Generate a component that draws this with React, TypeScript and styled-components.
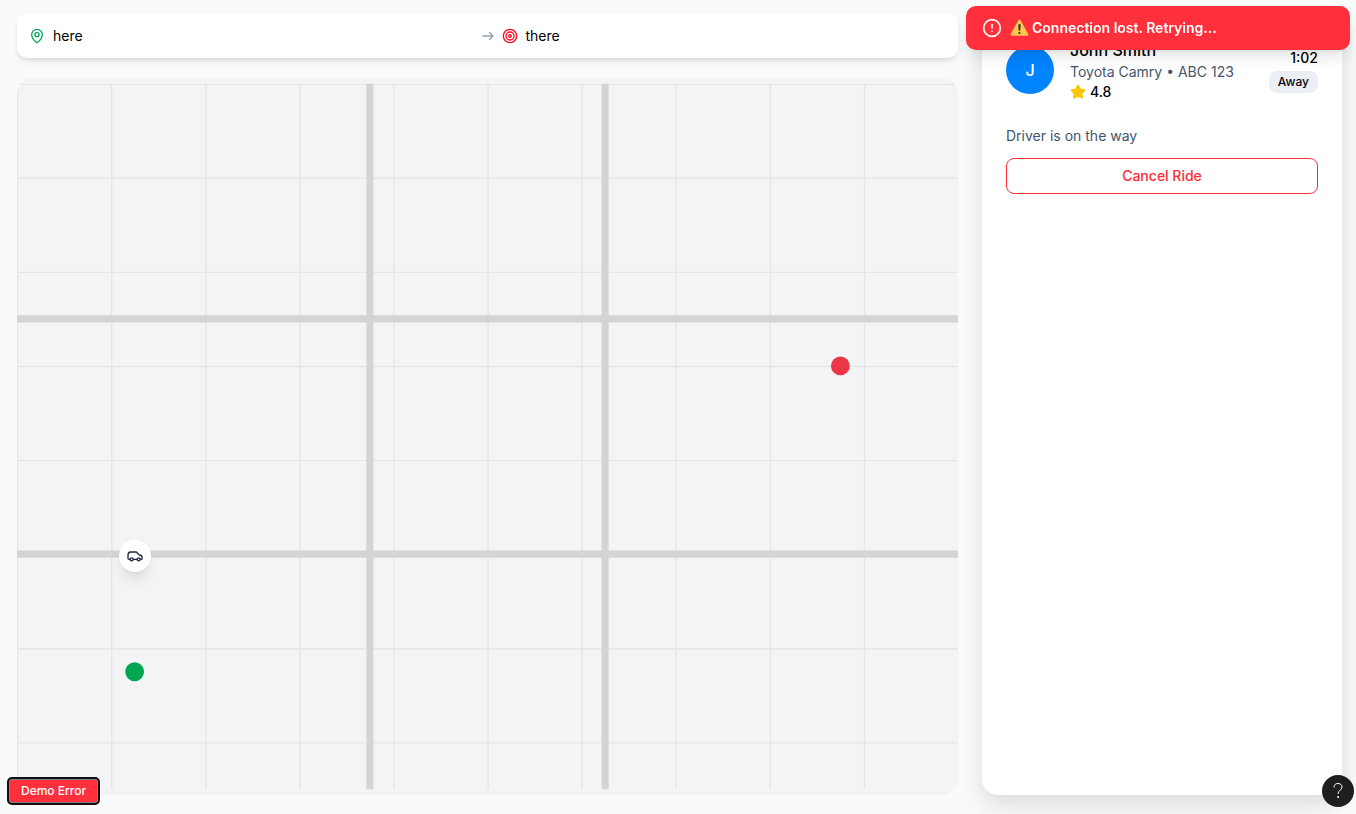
import React from "react";
import styled, { createGlobalStyle } from "styled-components";
import { MapPin, Target, CircleAlert, Star } from "lucide-react";

const GlobalStyle = createGlobalStyle`
  *, *::before, *::after { box-sizing: border-box; }
  body {
    margin: 0;
    background: #f9fafc;
    color: #000;
    font-family: Inter, "Noto Sans", sans-serif;
    font-size: 14px;
    line-height: 20px;
  }
  h2, p { margin: 0; }
  button { font-family: inherit; cursor: pointer; }
`;

const Page = styled.div`
  display: flex;
  gap: 24px;
  min-height: 100vh;
  padding: 14px 14px 19px 17px;
`;

const MainColumn = styled.main`
  flex: 1;
  min-width: 0;
  display: flex;
  flex-direction: column;
  gap: 20px;
`;

const RouteBar = styled.header`
  display: flex;
  align-items: center;
  gap: 6px;
  padding: 12px;
  border-radius: 10px;
  background: #fff;
  box-shadow: 0 4px 6px -1px rgba(0, 0, 0, 0.1), 0 2px 4px -2px rgba(0, 0, 0, 0.1);
`;

const RouteStop = styled.div`
  flex: 1;
  display: flex;
  align-items: center;
  gap: 8px;
`;

const MapCard = styled.section`
  position: relative;
  flex: 1;
  min-height: 0;
  border-radius: 16px;
  overflow: hidden;
  background: #f3f4f6;
`;

const MapDrawing = styled.svg`
  position: absolute;
  inset: 0;
  width: 100%;
  height: 100%;
`;

const CarMarker = styled.div<{ $x: string; $y: string }>`
  position: absolute;
  left: ${(p) => p.$x};
  top: ${(p) => p.$y};
  width: 32px;
  height: 32px;
  transform: translate(-50%, -50%);
  display: flex;
  align-items: center;
  justify-content: center;
  border-radius: 50%;
  background: #fff;
  box-shadow: 0 10px 15px -3px rgba(0, 0, 0, 0.1), 0 4px 6px -4px rgba(0, 0, 0, 0.1);
`;

const RidePanel = styled.aside`
  flex: 0 0 360px;
  padding: 24px;
  border-radius: 16px;
  background: #fff;
  box-shadow: 0 10px 25px rgba(0, 0, 0, 0.12);
`;

const DriverRow = styled.div`
  display: flex;
  align-items: center;
  gap: 16px;
`;

const Avatar = styled.div`
  flex: none;
  width: 48px;
  height: 48px;
  display: flex;
  align-items: center;
  justify-content: center;
  border-radius: 50%;
  background: #0084ff;
  color: #fff;
  font-size: 16px;
  font-weight: 500;
`;

const DriverInfo = styled.div`
  flex: 1;
  min-width: 0;
`;

const DriverName = styled.h2`
  font-size: 16px;
  font-weight: 500;
  line-height: 24px;
`;

const Muted = styled.p`
  color: #45556c;
`;

const Rating = styled.div`
  display: flex;
  align-items: center;
  gap: 4px;
  font-weight: 500;
`;

const Arrival = styled.div`
  display: flex;
  flex-direction: column;
  align-items: flex-end;
  gap: 3px;
  font-weight: 500;
`;

const Badge = styled.span`
  padding: 3px 9px;
  border-radius: 8px;
  background: #ebeef2;
  color: #030213;
  font-size: 12px;
  font-weight: 500;
  line-height: 16px;
`;

const Status = styled(Muted)`
  margin: 24px 0 12px;
`;

const CancelButton = styled.button`
  display: block;
  width: 100%;
  height: 36px;
  padding: 0 0 2px;
  border: 1px solid #fb2c36;
  border-radius: 8px;
  background: #fff;
  color: #fb2c36;
  font-size: 14px;
  font-weight: 500;
`;

const Toast = styled.div`
  position: fixed;
  top: 6px;
  right: 6px;
  width: 384px;
  display: flex;
  align-items: center;
  gap: 8px;
  padding: 12px 16px;
  border-radius: 10px;
  background: #ff2f3c;
  color: #fff;
  font-weight: 600;
  box-shadow: 0 10px 15px -3px rgba(0, 0, 0, 0.1), 0 4px 6px -4px rgba(0, 0, 0, 0.1);
`;

const ToastText = styled.span`
  display: flex;
  align-items: center;
  gap: 3px;
`;

const DemoButton = styled.button`
  position: fixed;
  left: 8px;
  bottom: 10px;
  height: 26px;
  padding: 0 11px 2px;
  border: 2px solid #8c8080;
  border-radius: 4px;
  outline: 2px solid #101010;
  outline-offset: -1px;
  background: #ff2f3c;
  color: #fff;
  font-size: 12px;
  font-weight: 500;
`;

const HelpButton = styled.button`
  position: fixed;
  right: 2px;
  bottom: 7px;
  width: 32px;
  height: 32px;
  display: flex;
  align-items: center;
  justify-content: center;
  padding: 0;
  border: 0;
  border-radius: 50%;
  background: #1e1e1e;
`;

const verticals = [0, 40, 80, 120, 160, 200, 240, 280, 320, 360];
const horizontals = [0, 40, 80, 120, 160, 200, 240, 280];

function CityMap() {
  return (
    <MapDrawing viewBox="0 0 400 300" role="img" aria-label="Ride map">
      <defs>
        <clipPath id="city">
          <rect width="400" height="300" />
        </clipPath>
      </defs>
      <g clipPath="url(#city)">
        <g stroke="#e5e6e8" strokeWidth="0.6">
          {verticals.map((x) => (
            <line key={x} x1={x + 0.25} x2={x + 0.25} y1="0" y2="300" />
          ))}
          {horizontals.map((y) => (
            <line key={y} x1="0" x2="400" y1={y + 0.25} y2={y + 0.25} />
          ))}
        </g>
        <g stroke="#d4d4d4" strokeWidth="3">
          <line x1="0" y1="100" x2="400" y2="100" />
          <line x1="0" y1="200" x2="400" y2="200" />
          <line x1="150" y1="0" x2="150" y2="300" />
          <line x1="250" y1="0" x2="250" y2="300" />
        </g>
      </g>
      <circle cx="50" cy="250" r="4" fill="#00a651" />
      <circle cx="350" cy="120" r="4" fill="#ed3548" />
    </MapDrawing>
  );
}

function ArrowIcon() {
  return (
    <svg width="16" height="16" viewBox="0 0 16 16" fill="none" stroke="#99a1af" strokeWidth="1.4" strokeLinecap="round" strokeLinejoin="round" aria-hidden="true">
      <path d="M3 8h10M9.500 4.500 13 8l-3.500 3.500" />
    </svg>
  );
}

function CarIcon() {
  return (
    <svg width="16" height="16" viewBox="0 0 24 24" fill="none" stroke="#1d293d" strokeWidth="2" strokeLinecap="round" strokeLinejoin="round" aria-hidden="true">
      <path d="M4.500 17H3a1.500 1.500 0 0 1-1.500-1.500V11c0-3 1.500-5 4-5h8.500l4.500 4.500c2.500.3 4 1.200 4 3.200V16a1 1 0 0 1-1 1h-1.500" />
      <path d="M9.500 17h5.500" />
      <circle cx="7" cy="17" r="2.300" />
      <circle cx="17.500" cy="17" r="2.300" />
    </svg>
  );
}

function WarningIcon() {
  return (
    <svg width="19" height="18" viewBox="0 0 19 18" aria-hidden="true">
      <path d="M8.300 1.200a1.300 1.300 0 0 1 2.200 0l7.700 13.800a1.200 1.200 0 0 1-1 1.800H1.700a1.200 1.200 0 0 1-1-1.800z" fill="#fcc74d" />
      <path d="M8.600 5.500h1.700l-.3 6h-1z" fill="#2b2b2b" stroke="#2b2b2b" strokeWidth="0.500" strokeLinejoin="round" />
      <circle cx="9.450" cy="14" r="1.100" fill="#2b2b2b" />
    </svg>
  );
}

export default function App() {
  return (
    <>
      <GlobalStyle />
      <Page>
        <MainColumn>
          <RouteBar>
            <RouteStop>
              <MapPin size={16} color="#00a651" />
              <span>here</span>
            </RouteStop>
            <ArrowIcon />
            <RouteStop>
              <Target size={16} color="#fb0a24" />
              <span>there</span>
            </RouteStop>
          </RouteBar>
          <MapCard>
            <CityMap />
            <CarMarker $x="12.5%" $y="66.67%">
              <CarIcon />
            </CarMarker>
          </MapCard>
        </MainColumn>
        <RidePanel>
          <DriverRow>
            <Avatar>J</Avatar>
            <DriverInfo>
              <DriverName>John Smith</DriverName>
              <Muted>Toyota Camry • ABC 123</Muted>
              <Rating>
                <Star size={16} color="#fdc700" fill="#fdc700" />
                4.8
              </Rating>
            </DriverInfo>
            <Arrival>
              1:02
              <Badge>Away</Badge>
            </Arrival>
          </DriverRow>
          <Status>Driver is on the way</Status>
          <CancelButton type="button">Cancel Ride</CancelButton>
        </RidePanel>
      </Page>
      <Toast role="alert">
        <CircleAlert size={20} strokeWidth={2} />
        <ToastText>
          <WarningIcon />
          Connection lost. Retrying...
        </ToastText>
      </Toast>
      <DemoButton type="button">Demo Error</DemoButton>
      <HelpButton type="button" aria-label="Help">
        <svg width="12" height="18" viewBox="0 0 12 18" fill="none" stroke="#fff" strokeWidth="1" strokeLinecap="round" aria-hidden="true">
          <path d="M2 5C2 2.500 3.700 1.500 6 1.500S10 2.800 10 5c0 3-4 3.500-4 6.500" />
          <circle cx="6" cy="15" r="0.500" fill="#fff" />
        </svg>
      </HelpButton>
    </>
  );
}
